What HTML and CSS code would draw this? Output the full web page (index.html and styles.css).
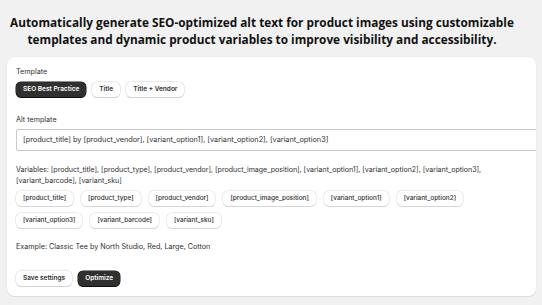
FILE: index.html
```html
<!DOCTYPE html>
<html>
<head>
<meta charset="utf-8">
<link rel="stylesheet" href="styles.css">
</head>
<body>
<h1 class="headline">Automatically generate SEO-optimized alt text for product images using customizable templates and dynamic product variables to improve visibility and accessibility.</h1>
<div class="card">
  <div class="label">Template</div>
  <div class="btn-row">
    <button class="btn btn-dark">SEO Best Practice</button>
    <button class="btn">Title</button>
    <button class="btn">Title + Vendor</button>
  </div>
  <div class="label label-alt">Alt template</div>
  <div class="input">[product_title] by [product_vendor], [variant_option1], [variant_option2], [variant_option3]</div>
  <p class="vars">Variables: [product_title], [product_type], [product_vendor], [product_image_position], [variant_option1], [variant_option2], [variant_option3], [variant_barcode], [variant_sku]</p>
  <div class="chips">
    <button class="chip">[product_title]</button>
    <button class="chip">[product_type]</button>
    <button class="chip">[product_vendor]</button>
    <button class="chip">[product_image_position]</button>
    <button class="chip">[variant_option1]</button>
    <button class="chip">[variant_option2]</button>
    <button class="chip">[variant_option3]</button>
    <button class="chip">[variant_barcode]</button>
    <button class="chip">[variant_sku]</button>
  </div>
  <p class="example">Example: Classic Tee by North Studio, Red, Large, Cotton</p>
  <div class="btn-row actions">
    <button class="btn">Save settings</button>
    <button class="btn btn-dark">Optimize</button>
  </div>
</div>
</body>
</html>
```
FILE: styles.css
```css
* { box-sizing: border-box; }
html, body { margin: 0; padding: 0; }
body {
  background: #f1f1f1;
  width: 542px;
  height: 305px;
  overflow: hidden;
  font-family: Inter, "Liberation Sans", sans-serif;
  color: #303030;
}
.headline {
  margin: 14px 0 0;
  padding: 0 18px 0 0;
  font-family: "Open Sans", sans-serif;
  font-weight: 700;
  font-size: 11.8px;
  line-height: 17px;
  text-align: center;
  color: #111;
}
.card {
  margin: 9px 6px 0 7px;
  background: #fff;
  border-radius: 8px;
  padding: 10px 9px 10px;
  box-shadow: 0 1px 0 #dcdcdc, 0 0 0 1px #ececec;
  overflow: hidden;
}
.label {
  font-size: 7.2px;
  line-height: 10px;
}
.label-alt { margin-top: 18px; }
.btn-row {
  display: flex;
  gap: 6px;
  margin-top: 5px;
}
.btn {
  font-family: Inter, "Liberation Sans", sans-serif;
  font-size: 6.5px;
  font-weight: 600;
  height: 15px;
  padding: 0 7px;
  border: 0;
  border-radius: 5px;
  background: #fff;
  color: #303030;
  box-shadow: 0 0 0 0.5px #d4d4d4, 0 1px 0 #d0d0d0;
  line-height: 15px;
}
.btn-dark {
  background: #303030;
  color: #fff;
  box-shadow: 0 0 0 0.5px #1a1a1a, 0 1px 0 #000;
}
.input {
  margin-top: 4px;
  width: calc(100% + 12px);
  height: 22px;
  border: 1px solid #c9c9c9;
  border-radius: 2px;
  padding: 0 6px;
  font-size: 7.3px;
  line-height: 20px;
  white-space: nowrap;
}
.vars {
  margin: 13px 0 0;
  font-size: 7.05px;
  line-height: 11px;
}
.chips {
  margin-top: 5px;
  display: flex;
  flex-wrap: wrap;
  column-gap: 8px;
  row-gap: 7px;
}
.chip {
  font-family: Inter, "Liberation Sans", sans-serif;
  font-size: 6.45px;
  font-weight: 500;
  height: 15px;
  padding: 0 7px;
  border: 0;
  border-radius: 5px;
  background: #fff;
  color: #303030;
  box-shadow: 0 0 0 0.5px #d8d8d8, 0 1px 0 #d4d4d4;
  line-height: 15px;
}
.example {
  margin: 14px 0 0;
  font-size: 7.2px;
  line-height: 10px;
}
.actions { margin-top: 19px; }
```
